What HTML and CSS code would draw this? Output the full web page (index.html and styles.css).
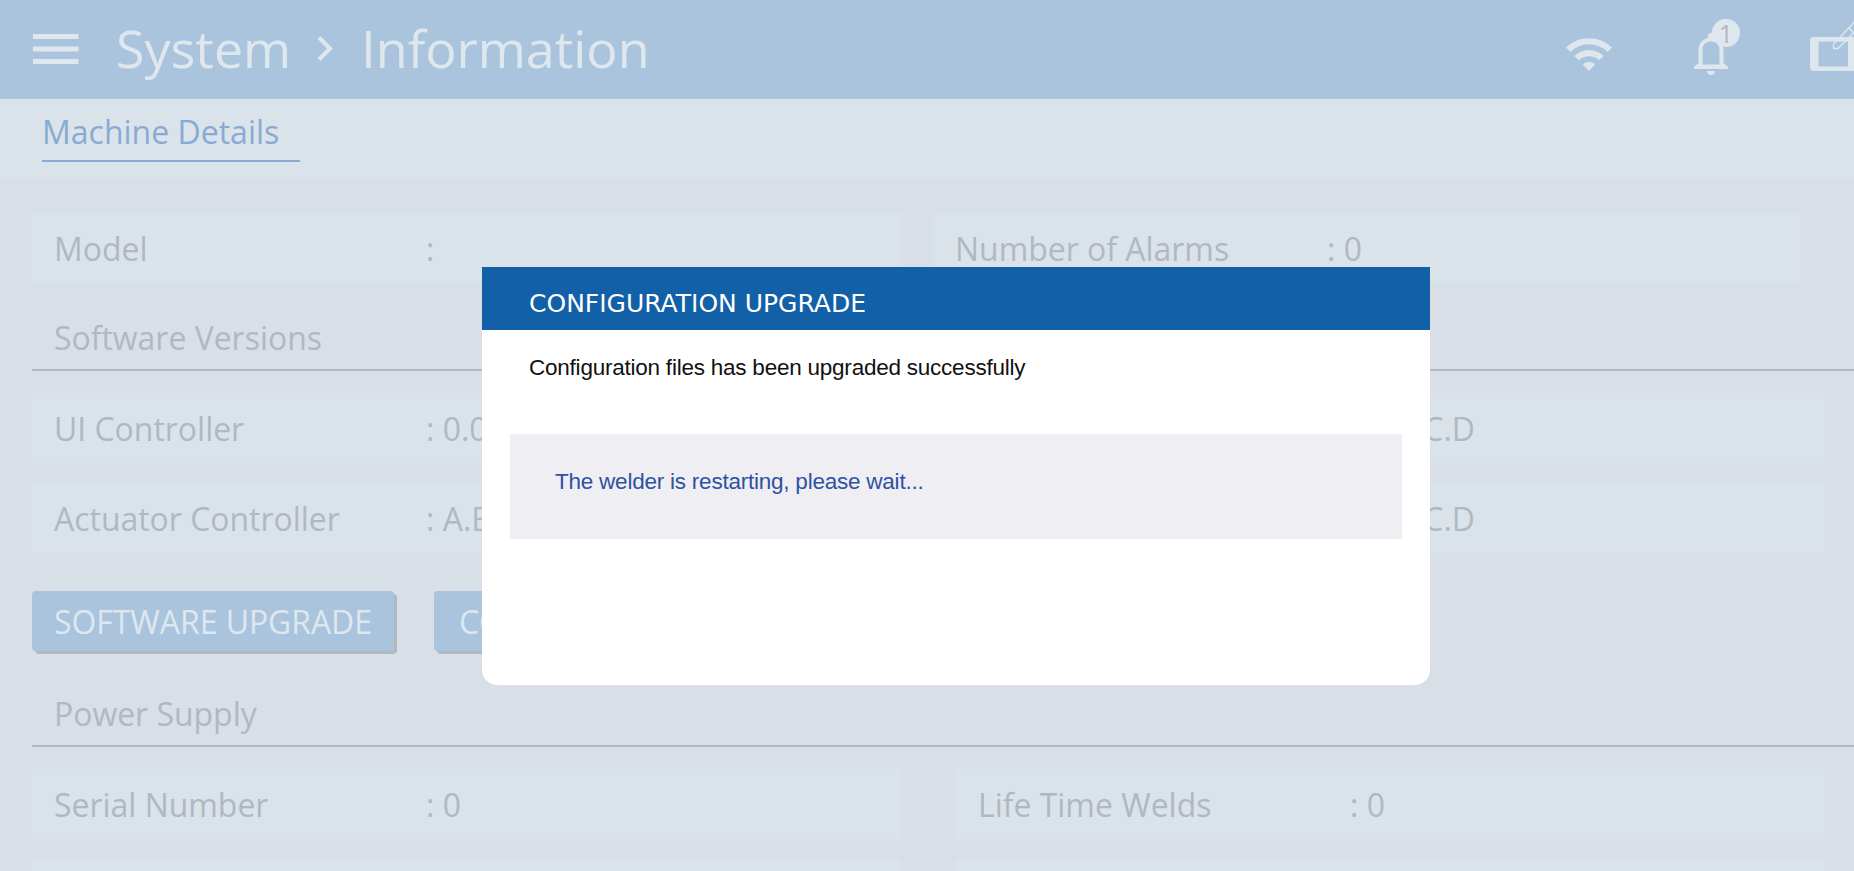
FILE: index.html
```html
<!DOCTYPE html>
<html lang="en">
<head>
<meta charset="utf-8">
<title>System - Information</title>
<link rel="stylesheet" href="styles.css">
</head>
<body>
<header class="topbar">
  <svg class="menu" width="46" height="30" viewBox="0 0 46 30"><path d="M0 0h45.500v5H0zM0 12.500h45.500v5H0zM0 25h45.500v5H0z"/></svg>
  <h1 class="crumb">System</h1>
  <svg class="chevron" width="17" height="26" viewBox="0 0 17 26"><path d="M2 1.500 13 12.500 2 23.500"/></svg>
  <h1 class="crumb">Information</h1>
  <div class="status">
    <svg class="wifi" width="46" height="33" viewBox="0 0 46 33"><path d="M0 9.500A33 33 0 0 1 46 9.500L41.600 13.900A26.500 26.500 0 0 0 4.400 13.900zM8.400 18A21 21 0 0 1 37.600 18L33.300 22.300A15 15 0 0 0 12.700 22.300zM16.800 26.500A9 9 0 0 1 29.200 26.500L23 32.700z"/></svg>
    <div class="alerts">
      <svg class="bell" width="34" height="42" viewBox="0 0 34 42"><path fill-rule="evenodd" d="M14 5V3a3 3 0 0 1 6 0V5C26 6.500 29.500 11 29.500 17V30L34 34V36H0V34L4.500 30V17C4.500 11 8 6.500 14 5zM8.500 31.500H25.500V17C25.500 11.500 22.500 8.500 17 8.500S8.500 11.500 8.500 17zM13 38H21A4 4 0 0 1 13 38z"/></svg>
      <span class="badge">1</span>
    </div>
    <svg class="tablet" width="44" height="52" viewBox="0 0 44 52"><path fill-rule="evenodd" d="M4 18H44V52H4A4 4 0 0 1 0 48V22A4 4 0 0 1 4 18zM8.500 22.500V47.500H38V22.500z"/><path class="pen" d="M44 3.500 23.500 25V29.500H28L44 13.500M39 9 44 14"/></svg>
  </div>
</header>
<nav class="tabs"><a class="tab">Machine Details</a></nav>
<main class="content">
  <div class="grid grid-top">
    <div class="field"><span class="label">Model</span><span>:</span></div>
    <div class="field"><span class="label">Number of Alarms</span><span>: 0</span></div>
  </div>
  <h2 class="section section-software">Software Versions</h2>
  <div class="grid">
    <div class="field"><span class="label">UI Controller</span><span>: 0.0</span></div>
    <div class="field"><span class="label"></span><span>: A.B.C.D</span></div>
    <div class="field"><span class="label">Actuator Controller</span><span>: A.B.C.D</span></div>
    <div class="field"><span class="label"></span><span>: A.B.C.D</span></div>
  </div>
  <div class="actions">
    <button class="button">SOFTWARE UPGRADE</button>
    <button class="button button-config">CONFIGURATION UPGRADE</button>
  </div>
  <h2 class="section">Power Supply</h2>
  <div class="grid grid-power">
    <div class="field"><span class="label">Serial Number</span><span>: 0</span></div>
    <div class="field"><span class="label">Life Time Welds</span><span>: 0</span></div>
    <div class="field"></div>
    <div class="field"></div>
  </div>
</main>
<section class="dialog" role="dialog">
  <h2 class="dialog-title">CONFIGURATION UPGRADE</h2>
  <p class="message">Configuration files has been upgraded successfully</p>
  <p class="notice">The welder is restarting, please wait...</p>
</section>
</body>
</html>
```

FILE: styles.css
```css
* { box-sizing: border-box; }
html, body { height: 100%; }
body {
  margin: 0;
  overflow: hidden;
  background: #d8dfe6;
  color: #b0b8c2;
  font-family: "Open Sans", sans-serif;
  font-size: 31.95px;
}
h1, h2, p { margin: 0; font-weight: 400; }
.topbar {
  display: flex;
  align-items: flex-start;
  height: 99px;
  padding-left: 33px;
  background: #abc4de;
  color: #dfe7ee;
}
.topbar svg { flex: none; fill: #dfe7ee; }
.menu { margin-top: 34px; }
.crumb { font-size: 52px; line-height: 71px; margin: 12px 0 0 37px; }
.crumb:last-of-type { margin-left: 27px; }
.chevron { margin: 36px 0 0 26px; }
.topbar .chevron path { fill: none; stroke: #dfe7ee; stroke-width: 4; }
.status { display: flex; margin-left: auto; }
.wifi { margin: 38px 82px 0 0; }
.alerts { position: relative; margin: 33px 82px 0 0; height: 42px; }
.bell { display: block; }
.badge {
  position: absolute;
  left: 18px;
  top: -14px;
  width: 28px;
  height: 28px;
  border-radius: 50%;
  background: #dfe7ee;
  color: #b0b8c2;
  font-size: 25px;
  line-height: 28px;
  text-align: center;
}
.tablet { margin-top: 19px; }
.topbar .pen { fill: none; stroke: #dfe7ee; stroke-width: 1.3; }
.tabs { height: 80px; padding-left: 42px; background: #dbe3ea; }
.tab {
  display: block;
  width: 258px;
  height: 63px;
  padding-top: 11px;
  border-bottom: 2px solid #87abd3;
  color: #87abd3;
  font-size: 32px;
  line-height: 43px;
}
.content { height: 692px; padding: 34px 0 0 32px; overflow: hidden; }
.grid {
  display: grid;
  grid-template-columns: 869px 870px;
  grid-auto-rows: 70px;
  gap: 20px 54px;
}
.grid-top { grid-template-columns: 869px 868px; column-gap: 32px; }
.grid-power { grid-template-rows: 70px 12px; }
.grid-power .field:nth-child(2) { padding-left: 23px; }
.field { display: flex; padding: 14px 22px 0; background: #dbe3ea; line-height: 44px; white-space: nowrap; }
.grid-power .field:nth-child(n+3) { padding-top: 0; }
.label { flex: none; width: 372px; }
.section {
  height: 61px;
  margin: 35px 0 22px;
  padding: 6px 0 0 22px;
  border-bottom: 2px solid #b0b8c2;
  font-size: 31.95px;
  line-height: 44px;
}
.section-software { height: 66px; margin-top: 22px; padding-top: 11px; }
.actions { display: flex; gap: 40px; margin-top: 38px; }
.button {
  width: 362px;
  height: 60px;
  padding: 0;
  border: 0;
  border-radius: 4px;
  background: #abc4de;
  box-shadow: 3px 3px 0 #b0b8c2;
  color: #dfe7ee;
  font: inherit;
  font-size: 31.9px;
  white-space: nowrap;
}
.button-config { width: 460px; padding-left: 25px; text-align: left; }
.dialog {
  position: absolute;
  left: 482px;
  top: 267px;
  width: 948px;
  height: 418px;
  border-radius: 0 0 15px 15px;
  background: #fff;
  color: #111;
  font-family: "Liberation Sans", sans-serif;
  font-size: 22.5px;
  letter-spacing: -0.23px;
}
.dialog-title {
  height: 63px;
  padding-left: 47px;
  background: #1260a7;
  color: #fff;
  font-family: "DejaVu Sans", sans-serif;
  font-size: 25px;
  letter-spacing: 0;
  line-height: 73px;
}
.message { padding: 25px 47px 0; line-height: 26px; }
.notice {
  height: 105px;
  margin: 53px 28px 0;
  padding: 35px 45px 0;
  background: #eeeef3;
  color: #2e52a3;
  line-height: 26px;
}
```
